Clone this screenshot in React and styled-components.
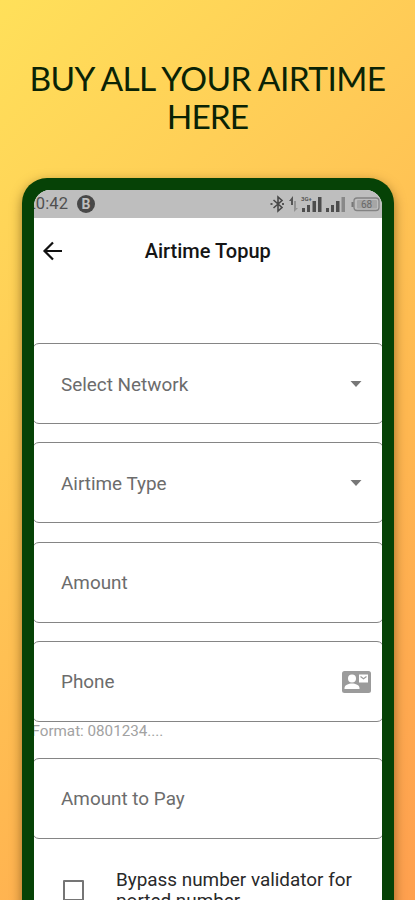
import { Fragment } from "react";
import styled, { createGlobalStyle } from "styled-components";

const GlobalStyle = createGlobalStyle`
  * {
    box-sizing: border-box;
  }
  body {
    margin: 0;
    overflow: hidden;
    font-family: Roboto, "Liberation Sans", sans-serif;
  }
`;

const Page = styled.div`
  height: 900px;
  padding-top: 59px;
  overflow: hidden;
  background: linear-gradient(
    135deg,
    #ffe05a 0%,
    #ffca56 35%,
    #ffb951 61%,
    #ffaa50 83%,
    #ffa04f 100%
  );
`;

const Heading = styled.h1`
  height: 119px;
  margin: 0;
  text-align: center;
  font-family: Lato, sans-serif;
  font-size: 33.5px;
  font-weight: 400;
  line-height: 38px;
  color: #0a2305;
`;

const HeadingLine = styled.span`
  display: block;
  white-space: nowrap;
  letter-spacing: ${(props) => props.$spacing};
`;

const Phone = styled.div`
  width: 372px;
  height: 800px;
  margin-left: 22px;
  padding: 11.5px 12px 0 11.5px;
  border-radius: 25px;
  background-color: #064206;
  box-shadow: 0 4px 12px rgba(70, 45, 0, 0.55);
`;

const Screen = styled.div`
  height: 100%;
  border-radius: 16px 16px 0 0;
  overflow: hidden;
  background-color: white;
`;

const StatusBar = styled.div`
  display: flex;
  align-items: center;
  height: 28px;
  padding-right: 1px;
  background-color: #bebebe;
  color: #505050;
`;

const Clock = styled.span`
  width: 43px;
  margin-left: -7px;
  font-size: 16.5px;
  letter-spacing: 0.1px;
  white-space: nowrap;
`;

const Badge = styled.span`
  display: flex;
  align-items: center;
  justify-content: center;
  width: 18px;
  height: 18px;
  margin-left: 7.5px;
  border-radius: 50%;
  background-color: #484848;
  color: #bebebe;
  font-size: 14px;
  font-weight: 700;
`;

const StatusIcons = styled.svg`
  margin-left: auto;
`;

const AppBar = styled.header`
  display: grid;
  grid-template-columns: 39px 1fr 39px;
  align-items: center;
  height: 67px;
  padding-bottom: 1px;
`;

const BackIcon = styled.svg`
  margin-left: 7px;
`;

const Title = styled.h2`
  margin: 0;
  text-align: center;
  font-size: 20px;
  font-weight: 500;
  color: #151515;
`;

const Form = styled.div`
  display: flex;
  flex-direction: column;
  gap: 18.3px;
  margin: 58.5px -2px 0;
`;

const Field = styled.div`
  display: flex;
  align-items: center;
  justify-content: space-between;
  height: 81px;
  padding: 1px ${(props) => props.$end || "21px"} 0 28.5px;
  border: 1px solid #858585;
  border-radius: 7px;
  font-size: 18.9px;
  color: #6c6c6c;
`;

const Hint = styled.div`
  height: 17.6px;
  margin-top: -18.3px;
  font-size: 15.2px;
  line-height: 19px;
  color: #a2a2a2;
`;

const CheckRow = styled.div`
  display: flex;
  align-items: flex-start;
  padding: 12px 0 0 31px;
`;

const Checkbox = styled.span`
  width: 21px;
  height: 21px;
  margin: 10.5px 32.5px 0 0;
  border: 2px solid #757575;
  border-radius: 1px;
`;

const CheckLabel = styled.span`
  font-size: 18.9px;
  line-height: 21px;
  color: #292929;
`;

const Dropdown = () => (
  <svg width="12" height="6" viewBox="0 0 12 6">
    <path d="M0.5 0h11L6 6z" fill="#777" />
  </svg>
);

const ContactMail = () => (
  <svg width="29" height="22" viewBox="0 0 29 22">
    <rect width="29" height="22" rx="2.5" fill="#9b9b9b" />
    <circle cx="10" cy="7.5" r="4" fill="#fff" />
    <path d="M2.5 18v-1c0-3 4-4.5 7.5-4.5s7.5 1.5 7.5 4.5v1z" fill="#fff" />
    <path d="M17 3.5h9v8h-9z" fill="#fff" />
    <path d="M18.5 5.5l3 2.2 3-2.2" fill="none" stroke="#9b9b9b" strokeWidth="1.2" />
  </svg>
);

const fields = [
  { label: "Select Network", icon: <Dropdown /> },
  { label: "Airtime Type", icon: <Dropdown /> },
  { label: "Amount" },
  { label: "Phone", icon: <ContactMail />, end: "12.5px", hint: "Format: 0801234...." },
  { label: "Amount to Pay" },
];

const App = () => {
  return (
    <Page>
      <GlobalStyle />
      <Heading>
        <HeadingLine $spacing="-0.6px">BUY ALL YOUR AIRTIME</HeadingLine>
        <HeadingLine $spacing="-1px">HERE</HeadingLine>
      </Heading>
      <Phone>
        <Screen>
          <StatusBar>
            <Clock>20:42</Clock>
            <Badge>B</Badge>
            <StatusIcons width="112" height="22" viewBox="0 0 112 22">
              <path
                d="M4.5 7l8.5 7.5-4 3.5V4l4 3.5L4.5 15"
                fill="none"
                stroke="#484848"
                strokeWidth="1.6"
              />
              <path d="M1.5 10h2v2h-2zM13 10h2v2h-2z" fill="#555" />
              <path d="M20 8l4-5v9h-2V8z" fill="#555" />
              <path d="M25 8h2v7h2l-4 4z" fill="#929292" />
              <text x="32" y="8" fontSize="6" fontWeight="700" fill="#555" fontFamily="Roboto">
                3G+
              </text>
              <path
                d="M33 15h3v4h-3zM38 12h3v7h-3zM43.5 8H47v11h-3.5zM49 4h3.5v15H49z"
                fill="#4d4d4d"
              />
              <path d="M57 15h3v4h-3zM62 12h3v7h-3zM67 8h3.5v11H67z" fill="#4d4d4d" />
              <path d="M72.5 4H76v15h-3.5z" fill="#888" />
              <rect x="85" y="5" width="25" height="12.5" rx="3" fill="none" stroke="#838383" strokeWidth="1.3" />
              <path d="M82.5 9h2v5h-2z" fill="#777" />
              <rect x="88" y="7" width="20" height="8.5" rx="1" fill="#a6a6a6" />
              <text x="92" y="15" fontSize="10" fill="#686868" fontFamily="Roboto">
                68
              </text>
            </StatusIcons>
          </StatusBar>
          <AppBar>
            <BackIcon width="24" height="24" viewBox="0 0 24 24">
              <path d="M21 12H4M12 3.5L3.5 12l8.5 8.5" fill="none" stroke="#111" strokeWidth="2.2" />
            </BackIcon>
            <Title>Airtime Topup</Title>
          </AppBar>
          <Form>
            {fields.map((field) => (
              <Fragment key={field.label}>
                <Field $end={field.end}>
                  {field.label}
                  {field.icon}
                </Field>
                {field.hint && <Hint>{field.hint}</Hint>}
              </Fragment>
            ))}
            <CheckRow>
              <Checkbox />
              <CheckLabel>
                Bypass number validator for
                <br />
                ported number
              </CheckLabel>
            </CheckRow>
          </Form>
        </Screen>
      </Phone>
    </Page>
  );
};

export default App;
